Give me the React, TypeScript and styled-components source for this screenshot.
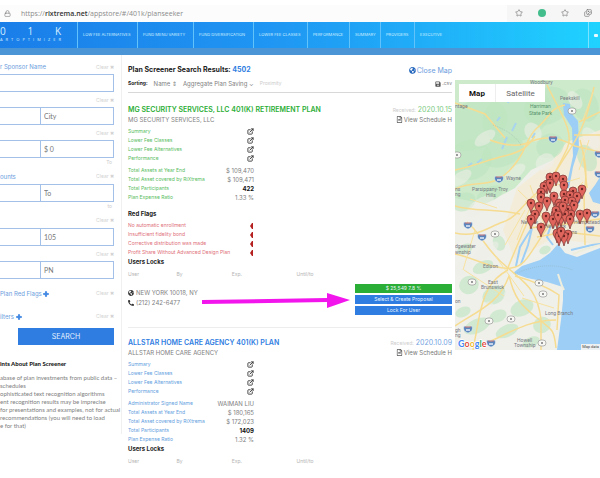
import React from "react";
import styled, { createGlobalStyle } from "styled-components";
import { ExternalLink, Lock, Star, Images } from "lucide-react";
import { FaGlobeAmericas, FaPhoneAlt, FaPlus, FaRegFileAlt, FaSave } from "react-icons/fa";

const blue = "#2f7de1";
const green = "#2bae35";

const GlobalStyle = createGlobalStyle`
  *, *::before, *::after { box-sizing: border-box; }
  body { margin: 0; background: #fff; overflow-x: hidden; font-family: Inter, "Liberation Sans", sans-serif; font-size: 6px; line-height: 9px; color: #808080; }
  h1, h2, h3, p, ul { margin: 0; padding: 0; }
  button, input { font-family: inherit; margin: 0; }
  button { cursor: pointer; }
  a { text-decoration: none; color: inherit; }
`;

const Page = styled.div`
  min-height: 100vh;
  overflow: hidden;
`;

const AddressBar = styled.header`
  display: flex;
  align-items: center;
  gap: 10px;
  height: 17px;
  margin-top: 5px;
  padding: 0 0 1px 4px;
  background: #fcfcfc;
  color: #777;
`;

const Url = styled.p`
  flex: 1;
  font-family: "Open Sans", sans-serif;
  font-size: 7px;
  color: #8b8b8b;
  b { font-weight: 600; color: #333; }
`;

const Tools = styled.div`
  display: flex;
  align-items: center;
  gap: 15px;
  height: 17px;
  padding: 0 8px;
  background: #f6f6f6;
`;

const Dot = styled.span`
  width: 8px;
  height: 8px;
  border-radius: 50%;
  background: #42bd8b;
`;

const Nav = styled.nav`
  display: flex;
  height: 33px;
  background: linear-gradient(90deg, #1a7ee9, #1f96f3 45%, #20adf8 70%, #1fd3ff);
  border-bottom: 7px solid #4b94d6;
`;

const Brand = styled.a`
  flex: none;
  width: 77px;
  padding-top: 4px;
  padding-right: 16px;
  color: #d7efff;
`;

const Spread = styled.span<{ $small?: boolean }>`
  display: flex;
  justify-content: space-between;
  font-family: "Open Sans", sans-serif;
  font-size: ${(p) => (p.$small ? 4 : 10)}px;
  line-height: ${(p) => (p.$small ? 5 : 11)}px;
`;

const NavLink = styled.a<{ $w: number }>`
  flex: none;
  width: ${(p) => p.$w}px;
  border-left: 1px solid #62c3fa;
  font-size: 4px;
  line-height: 25px;
  padding-left: 5px;
  white-space: nowrap;
  color: #cdeeff;
`;

const NavEnd = styled.span`
  display: flex;
  align-items: center;
  width: 12px;
  height: 26px;
  margin-left: auto;
  padding-left: 5px;
  border-left: 1px solid #7be3ff;
  &::after { content: ""; width: 4px; height: 3px; background: #e9fbff; border-radius: 1px; }
`;

const Columns = styled.div`
  display: grid;
  grid-template-columns: 122px minmax(0, 1fr) 145px;
  align-items: start;
`;

const Sidebar = styled.aside`
  min-height: 379px;
  padding: 4px 7px 0 0;
  border-right: 1px solid #f0f0f0;
`;

const Meta = styled.div<{ $h?: number }>`
  display: flex;
  align-items: center;
  justify-content: space-between;
  height: ${(p) => p.$h ?? 15}px;
  color: #6b9cdd;
  font-size: 6px;
  white-space: nowrap;
  svg { vertical-align: -1px; color: ${blue}; }
`;

const Clear = styled.button`
  margin-left: auto;
  padding: 0;
  border: 0;
  background: none;
  font-size: 5px;
  line-height: 8px;
  color: #d2d2d2;
`;

const Unit = styled.div`
  height: 10px;
  padding-right: 2px;
  text-align: right;
  font-size: 5px;
  color: #ccc;
`;

const Fields = styled.div`
  display: flex;
  height: 18px;
  border: 1px solid #a3c0e8;
  border-left: 0;
`;

const Field = styled.input<{ $wide?: boolean }>`
  flex: ${(p) => (p.$wide ? "1 1 0" : "0 0 40px")};
  min-width: 0;
  padding: 0 3px;
  border: 0;
  background: #fff;
  font-family: Lato, sans-serif;
  font-size: 7px;
  color: #555;
  & + & { border-left: 1px solid #a3c0e8; }
  &::placeholder { color: #777; opacity: 1; }
`;

const Search = styled.button`
  display: block;
  width: calc(100% - 18px);
  height: 17px;
  margin: 3px 0 14px 18px;
  padding: 0;
  border: 0;
  background: ${blue};
  color: #e5f1ff;
  font-size: 7px;
`;

const Hints = styled.section`
  font-family: Lato, sans-serif;
  font-size: 6px;
  line-height: 8px;
  white-space: nowrap;
  h3 { font-size: 6px; font-weight: 900; line-height: 10px; color: #222; margin-bottom: 5px; }
`;

const Results = styled.main`
  padding: 10px 3px 0 6px;
`;

const Bar = styled.div<{ $ruled?: boolean }>`
  display: flex;
  align-items: center;
  justify-content: space-between;
  height: ${(p) => (p.$ruled ? 18 : 10)}px;
  border-bottom: ${(p) => (p.$ruled ? "1px solid #d8d8d8" : "0")};
`;

const Heading = styled.h1`
  font-size: 7px;
  line-height: 10px;
  color: #222;
  span { color: ${blue}; }
`;

const TextButton = styled.button<{ $blue?: boolean }>`
  display: flex;
  align-items: center;
  gap: 1px;
  padding: 0;
  border: 0;
  background: none;
  color: ${(p) => (p.$blue ? "#6b9cdd" : "#888")};
  font-size: ${(p) => (p.$blue ? 7 : 5)}px;
  line-height: 9px;
  white-space: nowrap;
  svg { color: ${(p) => (p.$blue ? "#2568bd" : "#555")}; }
`;

const Sorting = styled.div`
  display: flex;
  gap: 6px;
  font-size: 6px;
  b { font-size: 5px; color: #222; }
  i { font-style: normal; font-size: 5px; color: #ccc; }
`;

const Card = styled.article<{ $first?: boolean }>`
  padding-top: ${(p) => (p.$first ? 12 : 10)}px;
  & + & { border-top: 1px solid #ededed; }
`;

const CardHead = styled.div`
  display: flex;
  justify-content: space-between;
  white-space: nowrap;
`;

const Title = styled.h2<{ $color: string }>`
  font-size: 7px;
  font-weight: 600;
  line-height: 10px;
  color: ${(p) => p.$color};
`;

const Company = styled.p`
  font-size: 6px;
  line-height: 9px;
`;

const Received = styled.div<{ $color: string }>`
  display: flex;
  flex-direction: column;
  align-items: flex-end;
  font-size: 7px;
  line-height: 10px;
  color: ${(p) => p.$color};
  small { font-size: 5px; color: #ccc; }
`;

const Schedule = styled.a`
  display: flex;
  align-items: center;
  gap: 1px;
  font-size: 6px;
  line-height: 9px;
  color: #777;
`;

const List = styled.ul<{ $color: string }>`
  list-style: none;
  width: 126px;
  margin-top: 3px;
  color: ${(p) => p.$color};
  font-size: 5px;
`;

const Item = styled.li`
  display: flex;
  align-items: center;
  justify-content: space-between;
  height: 9px;
  white-space: nowrap;
  a { display: flex; color: #333; }
`;

const Value = styled.span<{ $strong?: boolean }>`
  font-size: 6px;
  font-weight: ${(p) => (p.$strong ? 700 : 400)};
  color: ${(p) => (p.$strong ? "#111" : "#808080")};
`;

const SubHead = styled.h3<{ $spaced?: boolean }>`
  margin-top: ${(p) => (p.$spaced ? 7 : 0)}px;
  font-size: 6px;
  line-height: 9px;
  color: #222;
`;

const Locks = styled.table`
  width: 100%;
  margin-top: 4px;
  border-collapse: collapse;
  table-layout: fixed;
  th { height: 9px; padding: 0; text-align: left; font-size: 5px; line-height: 9px; font-weight: 400; color: #b4b4b4; }
  th:nth-child(1) { width: 15%; }
  th:nth-child(2) { width: 17%; }
  th:nth-child(3) { width: 20%; }
`;

const Foot = styled.div`
  display: flex;
  justify-content: space-between;
  margin: 5px 0 12px;
`;

const Contact = styled.address`
  padding-top: 4px;
  font-style: normal;
  font-size: 6px;
  line-height: 10px;
  svg { vertical-align: -1px; color: #333; margin-right: 2px; }
`;

const Actions = styled.div`
  display: grid;
  gap: 2px;
  width: 97px;
`;

const Action = styled.button<{ $green?: boolean }>`
  height: 9px;
  padding: 0;
  border: 0;
  background: ${(p) => (p.$green ? green : blue)};
  color: #e8f5ff;
  font-size: 5px;
  line-height: 9px;
`;

const Pointed = styled.div`
  position: relative;
`;

const Arrow = styled.svg`
  position: absolute;
  left: 74px;
  top: 8px;
  width: 148px;
  height: 17px;
`;

const MapPanel = styled.section`
  position: relative;
  margin-top: 25px;
  height: 270px;
  overflow: hidden;
  > svg { display: block; width: 100%; height: 100%; }
`;

const MapTabs = styled.div`
  position: absolute;
  left: 4px;
  top: 4px;
  display: flex;
  height: 18px;
  background: #fff;
`;

const MapTab = styled.button<{ $on?: boolean }>`
  width: ${(p) => (p.$on ? 36 : 50)}px;
  padding: 0;
  border: 0;
  border-left: ${(p) => (p.$on ? 0 : 1)}px solid #eee;
  background: none;
  font-family: Roboto, sans-serif;
  font-size: 8px;
  font-weight: ${(p) => (p.$on ? 700 : 400)};
  color: ${(p) => (p.$on ? "#111" : "#666")};
`;

const Attribution = styled.small`
  position: absolute;
  right: 0;
  bottom: 0;
  padding: 0 1px;
  white-space: nowrap;
  background: #edf1f2;
  color: #444;
  font-family: Roboto, sans-serif;
  font-size: 4px;
  line-height: 6px;
`;

const NAV: [string, number][] = [
  ["LOW FEE ALTERNATIVES", 60],
  ["FUND MENU VARIETY", 56],
  ["FUND DIVERSIFICATION", 60],
  ["LOWER FEE CLASSES", 54],
  ["PERFORMANCE", 42],
  ["SUMMARY", 31],
  ["PROVIDERS", 34],
  ["EXECUTIVE", 60],
];

const PINS = [
  [95, 98], [101, 97], [108, 100], [92, 105], [89, 107], [109, 106], [86, 113], [95, 104], [118, 112], [127, 110],
  [86, 118], [99, 117], [109, 115], [115, 116], [122, 117], [76, 124], [84, 127], [92, 122], [104, 124], [110, 121],
  [117, 122], [119, 126], [80, 135], [91, 137], [100, 135], [108, 131], [113, 130], [125, 135], [132, 134], [116, 135],
  [76, 140], [86, 148], [102, 140], [106, 138], [110, 135], [105, 127], [101, 131], [115, 140], [102, 154], [104, 157],
  [113, 155], [109, 157], [106, 152], [98, 140], [108, 127], [103, 136],
];

const FORESTS = [
  [20, 45, 34, 24], [62, 35, 36, 26], [92, 26, 24, 18], [15, 80, 22, 20], [48, 72, 22, 14], [130, 25, 13, 17],
  [95, 66, 14, 12], [132, 78, 9, 14], [9, 122, 12, 9], [35, 114, 14, 7], [14, 205, 10, 9], [39, 215, 12, 9],
  [67, 228, 12, 8], [22, 246, 14, 7], [52, 251, 12, 6], [87, 245, 9, 8], [28, 187, 11, 6], [10, 169, 8, 5],
  [44, 163, 6, 8], [90, 170, 6, 4], [76, 262, 9, 5], [8, 232, 8, 5], [43, 236, 9, 6],
];

const SUBURBS = [
  [30, 58, 12, 6], [6, 98, 12, 6], [60, 92, 12, 6], [78, 52, 8, 10], [120, 20, 6, 10], [90, 82, 10, 8],
  [25, 126, 16, 7], [136, 58, 7, 12], [30, 172, 16, 6], [8, 188, 10, 6], [56, 215, 8, 7], [30, 228, 9, 5],
];

const ROADS = [
  "M0 109 C22 99 35 110 54 91 S70 58 82 48 S96 27 110 25",
  "M0 90 C20 86 32 80 49 76 S72 68 80 56",
  "M35 60 C48 65 62 68 75 62 S104 57 120 66 L145 72",
  "M0 153 C22 158 33 147 48 142 S69 122 83 112 S104 85 112 69 S105 32 92 5",
  "M52 190 C58 175 65 159 72 143 S91 109 103 88 S128 58 139 7",
  "M0 174 C20 178 39 190 56 188 S75 170 99 139",
  "M12 142 C26 153 31 171 53 188 C70 203 82 209 86 239 L86 270",
  "M53 190 C36 199 28 213 23 243 L18 270",
  "M54 195 C59 219 67 226 82 238 S99 248 101 268",
  "M0 246 C22 231 44 224 54 196",
  "M60 196 C75 200 92 207 104 215 L102 250",
  "M36 261 C56 252 74 240 101 240",
  "M125 60 C130 78 133 91 129 115 L130 165",
  "M74 148 L103 145 L145 139",
  "M82 157 L110 152 L145 156",
  "M124 42 L145 32 M119 55 L145 55 M128 72 L132 108",
  "M0 23 L30 34 L50 58 M0 126 C20 132 38 128 65 134",
];

const SHIELDS = [[98, 59], [44, 99], [13, 145], [27, 157], [144, 74], [144, 94], [140, 134], [135, 149], [13, 249], [36, 263], [121, 121]];
const CIRCLES = [[117, 31], [2, 75], [17, 202], [84, 203], [88, 214], [34, 241], [56, 239], [87, 263], [40, 154]];

const LABELS: [number, number, string, string?][] = [
  [75, 4, "Woodbury"], [105, 20, "Peekskill"], [75, 28, "Harriman", "#57936c"], [74, 35, "State Park", "#57936c"],
  [0, 28, "ntage"], [51, 100, "Wayne"], [17, 111, "Parsippany-Troy"], [31, 117, "Hills"], [0, 111, "ns"], [0, 116, "ng"],
  [66, 144, "Newark"], [90, 148, "New York"], [114, 154, "ens"], [119, 144, "Hempstead"], [0, 168, "dgewater"], [0, 174, "wnship"],
  [28, 188, "Edison"], [33, 204, "East"], [26, 209, "Brunswick"], [90, 235, "Long Branch"], [62, 262, "Howell"], [59, 267, "Township"],
  [0, 223, "on"], [0, 252, "gh"], [0, 257, "ng"],
];

function RegionMap() {
  return (
    <svg viewBox="0 0 145 270" preserveAspectRatio="xMidYMid slice" role="img" aria-label="Map of plans around New York">
      <rect width="145" height="270" fill="#f0f0ea" />
      <path d="M0 0H145V55L112 62L98 80L76 90L60 108L30 124L0 118Z" fill="#cdeacb" />
      <path d="M112 62L145 50V165L98 158L60 180L48 150L62 108L98 80Z" fill="#f3ecd9" />
      {FORESTS.map(([x, y, rx, ry], i) => (
        <ellipse key={i} cx={x} cy={y} rx={rx} ry={ry} fill="#bce4bf" opacity=".6" transform={`rotate(-24 ${x} ${y})`} />
      ))}
      {SUBURBS.map(([x, y, rx, ry], i) => (
        <ellipse key={i} cx={x} cy={y} rx={rx} ry={ry} fill="#eeeeea" opacity=".55" transform={`rotate(-35 ${x} ${y})`} />
      ))}
      <path d="M58 193L67 186L85 180L95 173L103 164L110 173L122 177L145 168V270H102L106 240L108 220L108 207L92 202L72 198Z" fill="#9dcef5" />
      <path d="M108 23L115 24L116 33L123 41L124 68L118 87L114 108L111 108L118 76L117 48L109 35Z" fill="#9dcef5" />
      <path d="M145 97L140 105L134 113L138 122L145 124Z" fill="#9dcef5" />
      <path d="M61 186L65 167L73 154L77 148L73 165L66 184M98 165L92 157L97 142M116 170L137 165L145 164" fill="none" stroke="#9dcef5" strokeWidth="2" />
      <path d="M103 194L107 206L109 210M118 174L131 169L145 165" stroke="#eeeede" strokeWidth="2" fill="none" />
      <path d="M47 69l5-12M57 51l4-8M22 83l5-4M77 58l3-5M42 41l3-4M13 86l4-3M53 23l2-7" stroke="#a9d4ee" strokeWidth="2" />
      {ROADS.map((d) => <path key={d} d={d} fill="none" stroke="#f6dc91" strokeWidth="1.5" />)}
      <path d="M63 110L89 135L114 145M70 122L98 106L125 98M75 105L91 150M128 102L96 134M15 119L42 128M67 218L99 228M41 177L69 216M9 190L49 216M134 60L124 90M138 12L128 40M70 130L50 165M78 120L62 160M20 150L8 190" fill="none" stroke="#f7e2a0" strokeWidth="1" />
      <path d="M38 45Q58 52 66 65M60 194Q90 180 118 190" stroke="#8caaaf" strokeDasharray="1 1" strokeWidth=".4" fill="none" />
      {SHIELDS.map(([x, y], i) => (
        <g key={i} transform={`translate(${x} ${y})`}>
          <path d="M-4-3Q0-1 4-3Q6 2 0 4Q-6 2-4-3Z" fill="#5b86bd" stroke="#e5eef5" strokeWidth=".5" />
          <path d="M-3-2H3" stroke="#bd6c72" />
          <path d="M-2 1H2" stroke="#e4edfa" strokeWidth="1.5" />
        </g>
      ))}
      {CIRCLES.map(([x, y], i) => (
        <g key={i}>
          <rect x={x - 4} y={y - 3} width="8" height="6" rx="3" fill="#f8f8f5" stroke="#999" strokeWidth=".7" />
          <path d={`M${x - 1} ${y}h2`} stroke="#999" strokeWidth="2" />
        </g>
      ))}
      <g fontFamily="Roboto, sans-serif" fontSize="5">
        {LABELS.map(([x, y, text, color], i) => <text key={i} x={x} y={y} fill={color ?? "#777983"}>{text}</text>)}
      </g>
      {PINS.map(([x, y], i) => (
        <g key={i} transform={`translate(${x} ${y})`}>
          <path d="M0 9C-1 4-4 2-4-1A4 4 0 0 1 4-1C4 2 1 4 0 9Z" fill="#df655d" stroke="#78322f" strokeWidth=".7" />
          <circle cy="-1" r="1.2" fill="#672421" />
        </g>
      ))}
      <text x="3" y="267" fontFamily="Lato, sans-serif" fontWeight="700" fontSize="9" stroke="#fff" strokeWidth="1.5" paintOrder="stroke">
        <tspan fill="#4285f4">G</tspan><tspan fill="#e34b40">o</tspan><tspan fill="#edba31">o</tspan><tspan fill="#4285f4">g</tspan><tspan fill="#3ca95b">l</tspan><tspan fill="#e34b40">e</tspan>
      </text>
    </svg>
  );
}

const ClearButton = () => <Clear type="button">Clear ✖</Clear>;

function Pair({ left, right, placeholder }: { left: string; right: string; placeholder: string }) {
  return (
    <Fields>
      <Field aria-label={left} />
      <Field $wide aria-label={right} placeholder={placeholder} />
    </Fields>
  );
}

const LINKS = ["Summary", "Lower Fee Classes", "Lower Fee Alternatives", "Performance"];

function PlanHead({ title, company, date, color, dateColor }: { title: string; company: string; date: string; color: string; dateColor: string }) {
  return (
    <CardHead>
      <div>
        <Title $color={color}>{title}</Title>
        <Company>{company}</Company>
      </div>
      <Received $color={dateColor}>
        <span><small>Received:</small> {date}</span>
        <Schedule href="#schedule"><FaRegFileAlt size={7} color="#555" />View Schedule H</Schedule>
      </Received>
    </CardHead>
  );
}

function PlanLists({ color, values }: { color: string; values: [string, string, boolean?][] }) {
  return (
    <>
      <List $color={color}>
        {LINKS.map((t) => (
          <Item key={t}>{t}<a href="#open" aria-label={`Open ${t}`}><ExternalLink size={7} strokeWidth={3} /></a></Item>
        ))}
      </List>
      <List $color={color}>
        {values.map(([k, v, strong]) => <Item key={k}>{k}<Value $strong={strong}>{v}</Value></Item>)}
      </List>
    </>
  );
}

const LockTable = () => (
  <Locks><thead><tr><th>User</th><th>By</th><th>Exp.</th><th>Until/to</th></tr></thead></Locks>
);

export default function App() {
  return (
    <Page>
      <GlobalStyle />
      <AddressBar>
        <Lock size={7} />
        <Url>https://<b>rixtrema.net</b>/appstore/#/401k/planseeker</Url>
        <Tools><Star size={8} /><Dot /><Star size={8} /><Images size={8} /></Tools>
      </AddressBar>
      <Nav>
        <Brand href="#home">
          <Spread><span>0</span><span>1</span><span>K</span></Spread>
          <Spread $small>{"ARTOPTIMIZER".split("").map((c, i) => <span key={i}>{c}</span>)}</Spread>
        </Brand>
        {NAV.map(([t, w]) => <NavLink href="#tab" key={t} $w={w}>{t}</NavLink>)}
        <NavEnd />
      </Nav>
      <Columns>
        <Sidebar>
          <Meta><label htmlFor="sponsor">r Sponsor Name</label><ClearButton /></Meta>
          <Fields><Field $wide id="sponsor" /></Fields>
          <Meta><ClearButton /></Meta>
          <Pair left="State" right="City" placeholder="City" />
          <Meta><ClearButton /></Meta>
          <Pair left="Assets from" right="Assets to" placeholder="$ 0" />
          <Unit>To</Unit>
          <Meta $h={16}>ounts<ClearButton /></Meta>
          <Pair left="From" right="To" placeholder="To" />
          <Unit>to</Unit>
          <Meta $h={16}><ClearButton /></Meta>
          <Pair left="Form" right="Form number" placeholder="105" />
          <Meta><ClearButton /></Meta>
          <Pair left="Employer number" right="Plan number" placeholder="PN" />
          <Meta $h={28}><span>Plan Red Flags <FaPlus size={6} strokeWidth={60} stroke={blue} /></span><ClearButton /></Meta>
          <Meta $h={18}><span>ilters <FaPlus size={6} strokeWidth={60} stroke={blue} /></span><ClearButton /></Meta>
          <Search type="button">SEARCH</Search>
          <Hints>
            <h3>ints About Plan Screener</h3>
            <p>abase of plan investments from public data –</p>
            <p>schedules</p>
            <p>ophisticated text recognition algorithms</p>
            <p>ent recognition results may be imprecise</p>
            <p>for presentations and examples, not for actual</p>
            <p>recommendations (you will need to load</p>
            <p>e for that)</p>
          </Hints>
        </Sidebar>
        <Results>
          <Bar>
            <Heading>Plan Screener Search Results: <span>4502</span></Heading>
            <TextButton $blue type="button"><FaGlobeAmericas size={7} />Close Map</TextButton>
          </Bar>
          <Bar $ruled>
            <Sorting><b>Sorting:</b><span>Name ⇕</span><span>Aggregate Plan Saving ⌄</span><i>Proximity</i></Sorting>
            <TextButton type="button"><FaSave size={6} />.csv</TextButton>
          </Bar>
          <Card $first>
            <PlanHead title="MG SECURITY SERVICES, LLC 401(K) RETIREMENT PLAN" company="MG SECURITY SERVICES, LLC" date="2020.10.15" color={green} dateColor="#7dcb82" />
            <PlanLists
              color="#58bd60"
              values={[["Total Assets at Year End", "$ 109,470"], ["Total Asset covered by RiXtrema", "$ 109,471"], ["Total Participants", "422", true], ["Plan Expense Ratio", "1.33 %"]]}
            />
            <SubHead $spaced>Red Flags</SubHead>
            <List $color="#e07078">
              {["No automatic enrollment", "Insufficient fidelity bond", "Corrective distribution was made", "Profit Share Without Advanced Design Plan"].map((t) => (
                <Item key={t}>
                  {t}
                  <svg width="4" height="6" viewBox="0 0 4 6"><path d="M0 3L2 0H3V6H2Z" fill="#b52020" /></svg>
                </Item>
              ))}
            </List>
            <SubHead>Users Locks</SubHead>
            <LockTable />
            <Pointed>
              <Foot>
                <Contact>
                  <div><FaGlobeAmericas size={6} />NEW YORK 10018, NY</div>
                  <div><FaPhoneAlt size={6} />(212) 242-6477</div>
                </Contact>
                <Actions>
                  <Action $green type="button">$ 25,549 7.8 %</Action>
                  <Action type="button">Select &amp; Create Proposal</Action>
                  <Action type="button">Lock For User</Action>
                </Actions>
              </Foot>
              <Arrow viewBox="0 0 148 17" aria-hidden="true"><path d="M0 8L125 6V1L148 8L125 16V10L0 12Z" fill="#f216ed" /></Arrow>
            </Pointed>
          </Card>
          <Card>
            <PlanHead title="ALLSTAR HOME CARE AGENCY 401(K) PLAN" company="ALLSTAR HOME CARE AGENCY" date="2020.10.09" color={blue} dateColor="#75a4df" />
            <PlanLists
              color="#5f9ede"
              values={[["Administrator Signed Name", "WAIMAN LIU"], ["Total Assets at Year End", "$ 180,165"], ["Total Asset covered by RiXtrema", "$ 172,023"], ["Total Participants", "1409", true], ["Plan Expense Ratio", "1.32 %"]]}
            />
            <SubHead>Users Locks</SubHead>
            <LockTable />
          </Card>
        </Results>
        <MapPanel>
          <RegionMap />
          <MapTabs><MapTab $on type="button">Map</MapTab><MapTab type="button">Satellite</MapTab></MapTabs>
          <Attribution>Map data</Attribution>
        </MapPanel>
      </Columns>
    </Page>
  );
}
